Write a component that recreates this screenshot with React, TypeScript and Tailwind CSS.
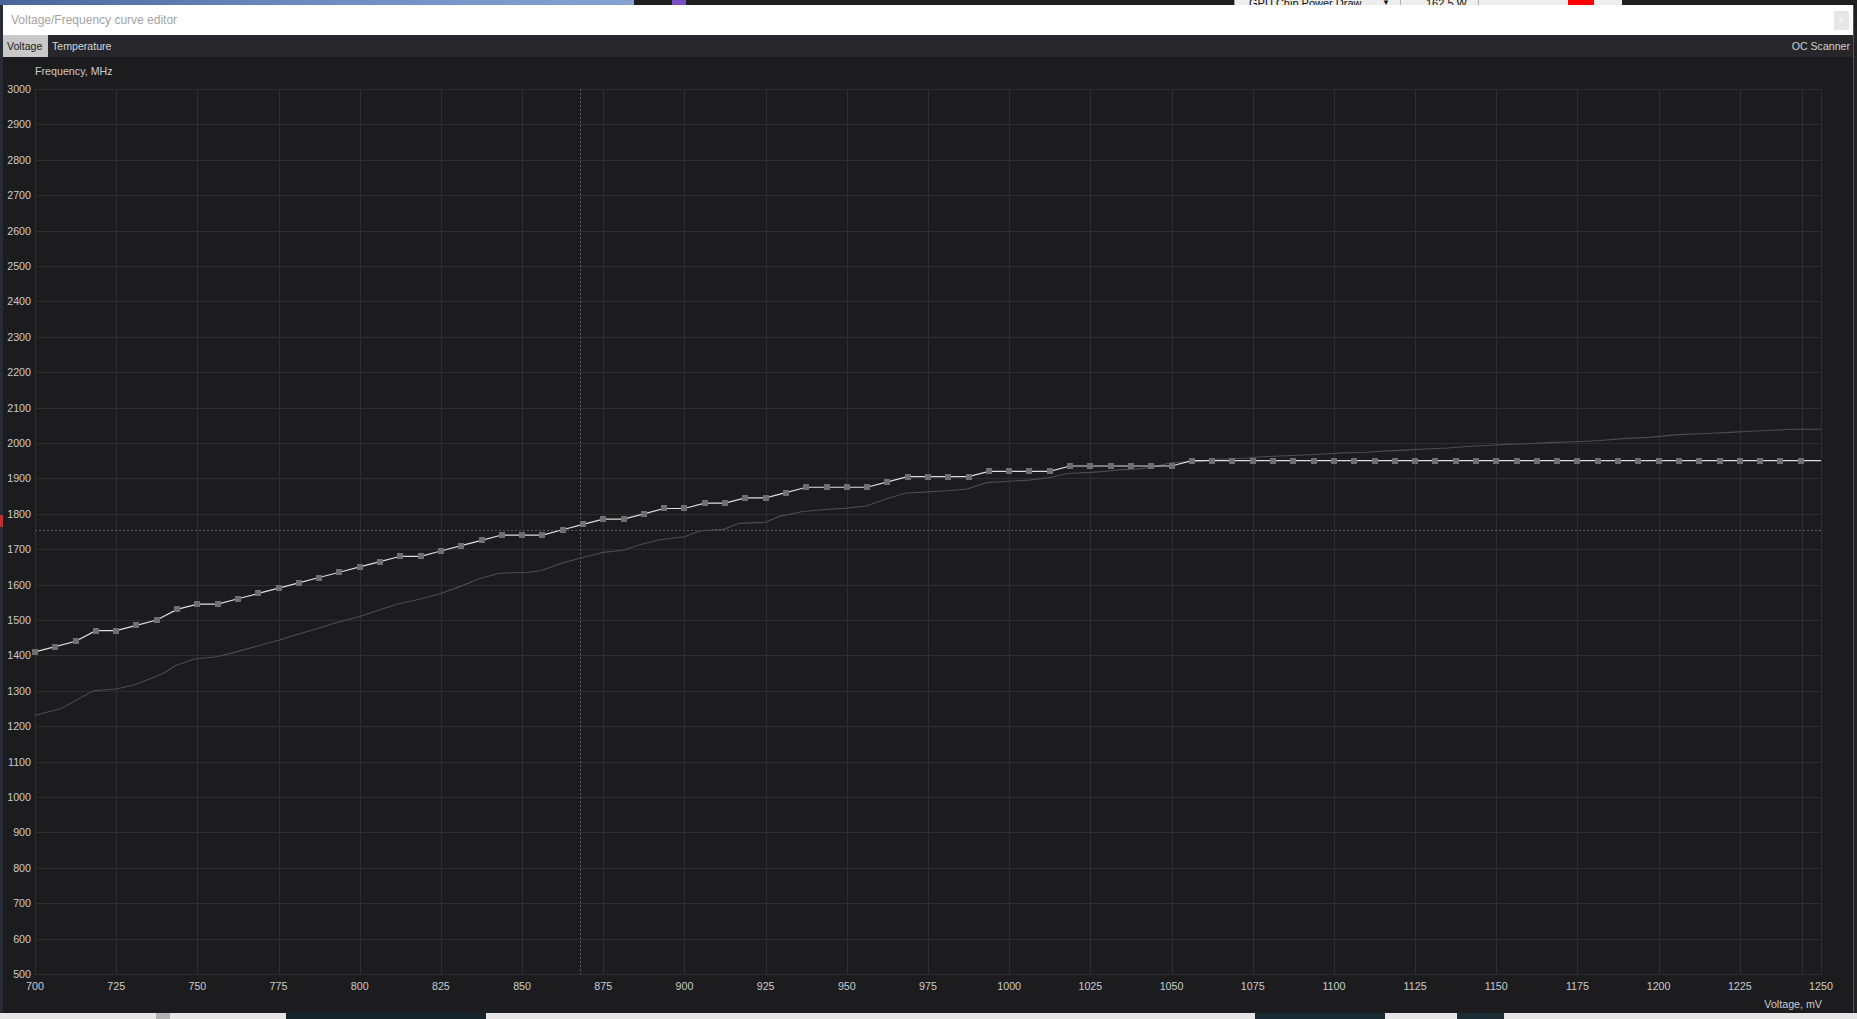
import React from "react";

const PLOT_L = 35;
const PLOT_R = 1821;
const PLOT_T = 89;
const PLOT_B = 974;
const xv = (v: number) => PLOT_L + ((v - 700) * (PLOT_R - PLOT_L)) / 550;
const yf = (f: number) => PLOT_T + ((3000 - f) * (PLOT_B - PLOT_T)) / 2500;
const crisp = (n: number) => Math.round(n) + 0.5;

const mainF: number[] = [
  1410, 1425, 1440, 1470, 1470, 1485, 1500, 1530, 1545, 1545, 1560, 1575, 1590, 1605, 1620, 1635,
  1650, 1665, 1680, 1680, 1695, 1710, 1725, 1740, 1740, 1740, 1755, 1770, 1785, 1785, 1800, 1815,
  1815, 1830, 1830, 1845, 1845, 1860, 1875, 1875, 1875, 1875, 1890, 1905, 1905, 1905, 1905, 1920,
  1920, 1920, 1920, 1935, 1935, 1935, 1935, 1935, 1935,
];
while (mainF.length < 88) mainF.push(1950);
const mainPts = mainF.map((f, k) => [700 + 6.25 * k, f] as [number, number]);

const lowerPts: [number, number][] = [
  [700, 1230], [703, 1238], [708, 1250], [711.7, 1268], [714, 1280], [718, 1300], [725, 1305],
  [731, 1318], [737, 1340], [740, 1352], [743, 1370], [749, 1390], [756, 1396], [762, 1410],
  [768, 1425], [775, 1443], [781, 1460], [787, 1476], [793, 1493], [800, 1510], [806, 1528],
  [812, 1546], [818, 1558], [825, 1575], [831, 1595], [837, 1617], [843, 1632], [852, 1635],
  [856, 1640], [862, 1660], [868, 1675], [875, 1691], [881, 1697], [886, 1712], [892, 1726],
  [900, 1735], [905, 1752], [912, 1756], [917, 1773], [925, 1776], [929, 1792], [936, 1806],
  [943, 1812], [950, 1816], [956, 1822], [962, 1842], [968, 1858], [975, 1862], [981, 1865],
  [987, 1870], [993, 1888], [1000, 1892], [1006, 1895], [1012, 1902], [1018, 1914], [1025, 1917],
  [1028, 1919], [1034, 1924], [1040, 1927], [1045, 1933], [1049, 1943], [1051, 1945], [1059, 1948],
  [1064, 1954], [1072, 1957], [1078, 1961], [1085, 1964], [1091, 1966], [1097, 1969], [1103, 1972],
  [1110, 1974], [1115, 1977], [1122, 1980], [1128, 1983], [1135, 1986], [1141, 1990], [1147, 1993],
  [1153, 1996], [1160, 1998], [1166, 2001], [1172, 2003], [1178, 2005], [1182, 2007], [1190, 2013],
  [1197, 2016], [1202, 2020], [1205, 2023], [1210, 2025], [1215, 2027], [1222, 2030], [1228, 2033],
  [1235, 2036], [1241, 2039], [1250, 2039],
];

const FONT = '"Liberation Sans", Arial, sans-serif';

function Chart() {
  const vTicks: number[] = [];
  for (let v = 700; v <= 1250; v += 25) vTicks.push(v);
  const fTicks: number[] = [];
  for (let f = 500; f <= 3000; f += 100) fTicks.push(f);
  const mainLine = [...mainPts.map(([v, f]) => `${xv(v)},${yf(f)}`), `${xv(1250)},${yf(1950)}`].join(" ");
  const lowerLine = lowerPts.map(([v, f]) => `${xv(v)},${yf(f)}`).join(" ");
  return (
    <svg width={1850} height={956} viewBox="3 57 1850 956" className="block">
      <g stroke="#2e2e32" strokeWidth={1} shapeRendering="crispEdges">
        {fTicks.map((f) => (
          <line key={"h" + f} x1={PLOT_L} x2={PLOT_R + 1} y1={crisp(yf(f))} y2={crisp(yf(f))} />
        ))}
        {vTicks.map((v) => (
          <line key={"v" + v} x1={crisp(xv(v))} x2={crisp(xv(v))} y1={PLOT_T} y2={PLOT_B + 1} />
        ))}
        <line x1={1802.5} x2={1802.5} y1={PLOT_T} y2={PLOT_B + 1} />
      </g>
      <g stroke="#5c5c5f" strokeWidth={1} strokeDasharray="2 2" shapeRendering="crispEdges">
        <line x1={580.5} x2={580.5} y1={PLOT_T} y2={PLOT_B} />
        <line x1={PLOT_L} x2={PLOT_R} y1={530.5} y2={530.5} />
      </g>
      <polyline points={lowerLine} fill="none" stroke="#4d4d50" strokeWidth={1.1} />
      <polyline points={mainLine} fill="none" stroke="#dedede" strokeWidth={1.2} />
      <g fill="#6f6f6f">
        {mainPts.map(([v, f]) => (
          <rect key={v} x={Math.round(xv(v)) - 3} y={Math.round(yf(f)) - 3} width={6} height={6} />
        ))}
      </g>
      <g fill="#cbcbcb" fontFamily={FONT} fontSize={10.7}>
        <text x={35} y={71} dominantBaseline="central">Frequency, MHz</text>
        {fTicks.map((f) => (
          <text key={"yl" + f} x={31} y={yf(f)} textAnchor="end" dominantBaseline="central">
            {f}
          </text>
        ))}
        {vTicks.map((v) => (
          <text key={"xl" + v} x={xv(v)} y={986} textAnchor="middle" dominantBaseline="central">
            {v}
          </text>
        ))}
        <text x={1822} y={1004} textAnchor="end" dominantBaseline="central">Voltage, mV</text>
      </g>
    </svg>
  );
}

function TopStrip() {
  return (
    <div className="h-[5px] flex overflow-hidden">
      <div className="w-[634px] bg-gradient-to-r from-[#4a6598] via-[#6f8cc2] to-[#86a2d2]" />
      <div className="w-[38px] bg-[#1e1e1f]" />
      <div className="w-[14px] bg-[#7a4cc6]" />
      <div className="w-[548px] bg-[#1e1e1f]" />
      <div className="w-[388px] bg-[#ededed] border-l border-[#9a9a9a] flex items-start text-[11px] leading-[14px] text-[#111] overflow-hidden">
        <div className="w-[165px] pl-[14px] -mt-[4px] whitespace-nowrap flex justify-between pr-[10px]">
          <span>GPU Chip Power Draw</span>
          <span className="text-[8px]">▼</span>
        </div>
        <div className="w-px h-full bg-[#b0b0b0]" />
        <div className="w-[77px] pl-[25px] -mt-[4px] whitespace-nowrap">162.5 W</div>
        <div className="w-px h-full bg-[#b0b0b0]" />
        <div className="w-[89px]" />
        <div className="w-[26px] h-full bg-[#ff0000]" />
      </div>
      <div className="flex-1 bg-[#1f1f1f]" />
    </div>
  );
}

function BottomStrip() {
  return (
    <div className="h-[6px] flex bg-[#e6e6e6]">
      <div className="w-[156px]" />
      <div className="w-[14px] bg-[#b2b2b2]" />
      <div className="w-[116px]" />
      <div className="w-[200px] bg-[#16242c]" />
      <div className="w-[769px]" />
      <div className="w-[130px] bg-[#1a2a33]" />
      <div className="w-[72px]" />
      <div className="w-[47px] bg-[#1c2c34]" />
      <div className="flex-1" />
    </div>
  );
}

function Window() {
  return (
    <div className="w-[1850px] h-[1008px] flex flex-col bg-[#1c1c1f]">
      <div className="h-[30px] bg-white flex items-center justify-between pl-[8px] pr-[4px]">
        <span className="text-[12px] text-[#a3a3a3]">Voltage/Frequency curve editor</span>
        <div className="w-[15px] h-[19px] bg-[#e6e6e6] flex items-center justify-center text-[10px] leading-none text-[#fafafa]">
          x
        </div>
      </div>
      <div className="h-[22px] bg-[#27272b] flex items-stretch text-[10.6px]">
        <div className="bg-[#c8c8c8] text-[#1c1c1c] px-[4px] pt-px flex items-center w-[45px]">Voltage</div>
        <div className="text-[#d6d6d6] px-[4px] pt-px flex items-center">Temperature</div>
        <div className="flex-1" />
        <div className="text-[#d0d0d0] pr-[3px] pt-px flex items-center">OC Scanner</div>
      </div>
      <div className="flex-1 bg-[#1c1c1f]">
        <Chart />
      </div>
    </div>
  );
}

export default function App() {
  return (
    <div className="w-[1857px] h-[1019px] overflow-hidden flex flex-col" style={{ fontFamily: FONT }}>
      <TopStrip />
      <div className="flex h-[1008px]">
        <div className="w-[3px] flex flex-col bg-[#262c36]">
          <div className="h-[510px]" />
          <div className="h-[12px] bg-[#c03030]" />
          <div className="flex-1" />
        </div>
        <Window />
        <div className="flex-1 bg-[#222] border-l border-[#555]" />
      </div>
      <BottomStrip />
    </div>
  );
}
